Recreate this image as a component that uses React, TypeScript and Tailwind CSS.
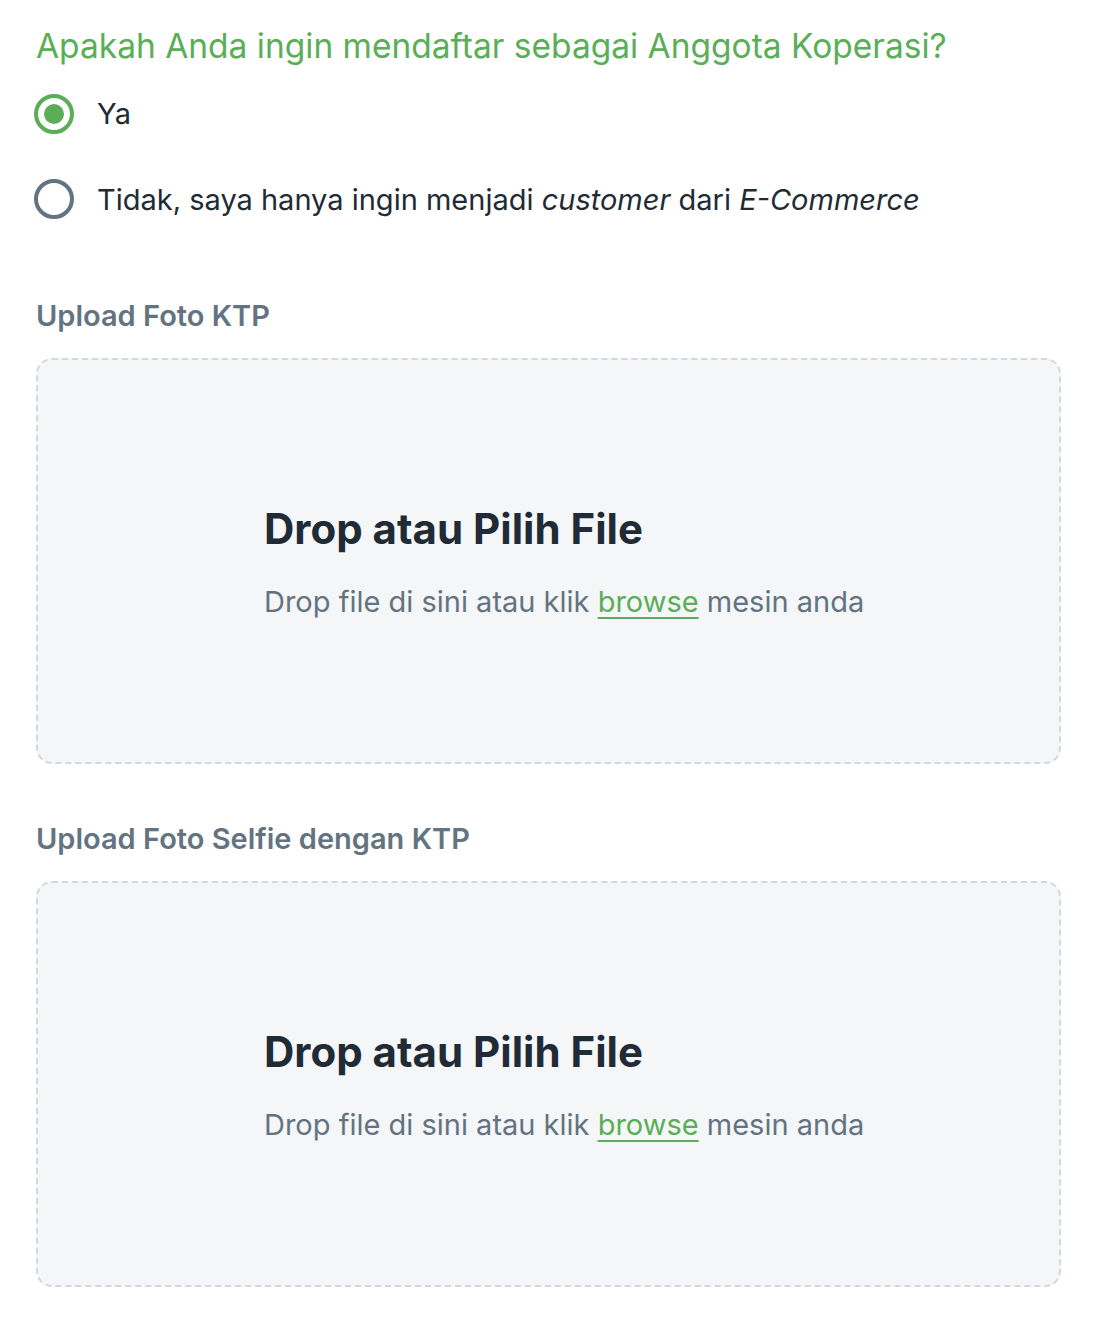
import React, { useState } from "react";

function Radio({ checked }: { checked: boolean }) {
  return checked ? (
    <span className="flex h-[40px] w-[40px] shrink-0 items-center justify-center rounded-full border-[4px] border-[#5aae57]">
      <span className="h-[20px] w-[20px] rounded-full bg-[#5aae57]" />
    </span>
  ) : (
    <span className="h-[40px] w-[40px] shrink-0 rounded-full border-[4px] border-[#637381]" />
  );
}

function DropZone({ label }: { label: string }) {
  return (
    <div>
      <div className="text-[29px] font-semibold leading-[36px] text-[#637381]">{label}</div>
      <div className="mt-[24px] flex h-[406px] flex-col justify-center rounded-[16px] border-2 border-dashed border-[#d3d8de] bg-[#f4f6f8] pl-[226px]">
        <h3 className="text-[42px] font-bold leading-[52px] text-[#212b36]">Drop atau Pilih File</h3>
        <p className="mt-[29px] text-[29px] leading-[36px] text-[#637381]">
          Drop file di sini atau klik{" "}
          <span className="text-[#5aae57] underline underline-offset-[5px]">browse</span> mesin anda
        </p>
      </div>
    </div>
  );
}

export default function App() {
  const [member, setMember] = useState(true);

  return (
    <div className="min-h-[1322px] bg-white pl-[36px] pr-[41px] pt-[26px] font-['Inter',sans-serif]">
      <h2 className="text-[33.5px] leading-[40px] text-[#5aae57]">
        Apakah Anda ingin mendaftar sebagai Anggota Koperasi?
      </h2>

      <div className="mt-[26px] flex flex-col gap-[42px]">
        <label className="-ml-[2px] flex cursor-pointer items-center gap-[23px]" onClick={() => setMember(true)}>
          <Radio checked={member} />
          <span className="text-[29px] text-[#212b36]">Ya</span>
        </label>
        <label className="-ml-[2px] flex cursor-pointer items-center gap-[23px]" onClick={() => setMember(false)}>
          <Radio checked={!member} />
          <span className="text-[29px] text-[#212b36]">
            Tidak, saya hanya ingin menjadi <i>customer</i> dari <i>E-Commerce</i>
          </span>
        </label>
      </div>

      <div className="mt-[77px] flex flex-col gap-[57px]">
        <DropZone label="Upload Foto KTP" />
        <DropZone label="Upload Foto Selfie dengan KTP" />
      </div>
    </div>
  );
}
